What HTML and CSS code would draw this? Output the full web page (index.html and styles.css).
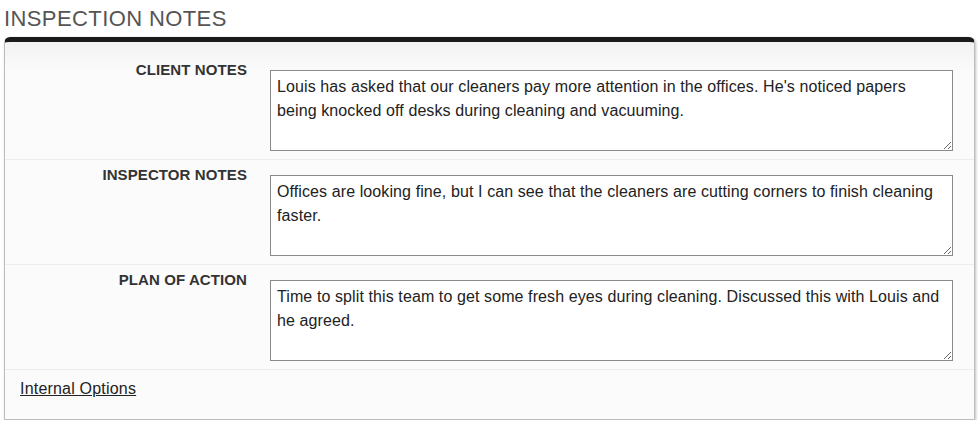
FILE: index.html
```html
<!DOCTYPE html>
<html lang="en">
<head>
    <meta charset="UTF-8">
    <meta name="viewport" content="width=device-width, initial-scale=1.0">
    <title>Inspection Notes</title>
    <link rel="stylesheet" href="styles.css">
</head>
<body>
    <h2 class="section-title">INSPECTION NOTES</h2>
    <div class="panel">
        <div class="note-row">
            <label class="note-label" for="clientNotes">CLIENT NOTES</label>
            <textarea id="clientNotes" class="note-input">Louis has asked that our cleaners pay more attention in the offices. He's noticed papers being knocked off desks during cleaning and vacuuming.</textarea>
        </div>
        <div class="note-row">
            <label class="note-label" for="inspectorNotes">INSPECTOR NOTES</label>
            <textarea id="inspectorNotes" class="note-input">Offices are looking fine, but I can see that the cleaners are cutting corners to finish cleaning faster.</textarea>
        </div>
        <div class="note-row">
            <label class="note-label" for="planOfAction">PLAN OF ACTION</label>
            <textarea id="planOfAction" class="note-input">Time to split this team to get some fresh eyes during cleaning. Discussed this with Louis and he agreed.</textarea>
        </div>
        <div class="panel-footer">
            <a href="#" class="footer-link">Internal Options</a>
        </div>
    </div>
</body>
</html>
```

FILE: styles.css
```css
body {
    font-family: "Liberation Sans", Arial, sans-serif;
    margin: 0;
    padding: 0 3px 0 4px;
    background-color: #ffffff;
    color: #333;
}

.section-title {
    margin: 6px 0 5px 0;
    font-size: 22px;
    line-height: 26px;
    font-weight: normal;
    letter-spacing: 0.4px;
    color: #555;
}

.panel {
    border: 1px solid #bdbdbd;
    border-top: 5px solid #1a1a1a; /* dark bar on top */
    border-radius: 6px 6px 0 0;
    background: linear-gradient(#f2f2f2, #fbfbfb 30px);
    box-shadow: 1px 1px 3px rgba(0, 0, 0, 0.25);
    padding-top: 13px;
}

.note-row {
    display: grid;
    grid-template-columns: 242px 1fr;
    column-gap: 23px;
    padding: 6px 21px 8px 0;
    border-bottom: 1px solid #ececec;
}

.note-label {
    text-align: right;
    font-size: 15px;
    line-height: 17px;
    font-weight: bold;
    letter-spacing: 0.1px;
    color: #333;
}

.note-input {
    display: block;
    box-sizing: border-box;
    width: 100%;
    height: 81px;
    margin: 9px 0 0 0;
    padding: 4px 8px 4px 6px;
    border: 1px solid #8a8a8a;
    border-radius: 0;
    background-color: #ffffff;
    font-family: "Liberation Sans", Arial, sans-serif;
    font-size: 16px;
    line-height: 24px;
    letter-spacing: 0.1px;
    color: #222;
}

.panel-footer {
    padding: 9px 14px 20px 15px;
    line-height: 20px;
}

.footer-link {
    font-size: 16px;
    letter-spacing: 0.2px;
    color: #222;
    text-decoration: underline;
}
```
